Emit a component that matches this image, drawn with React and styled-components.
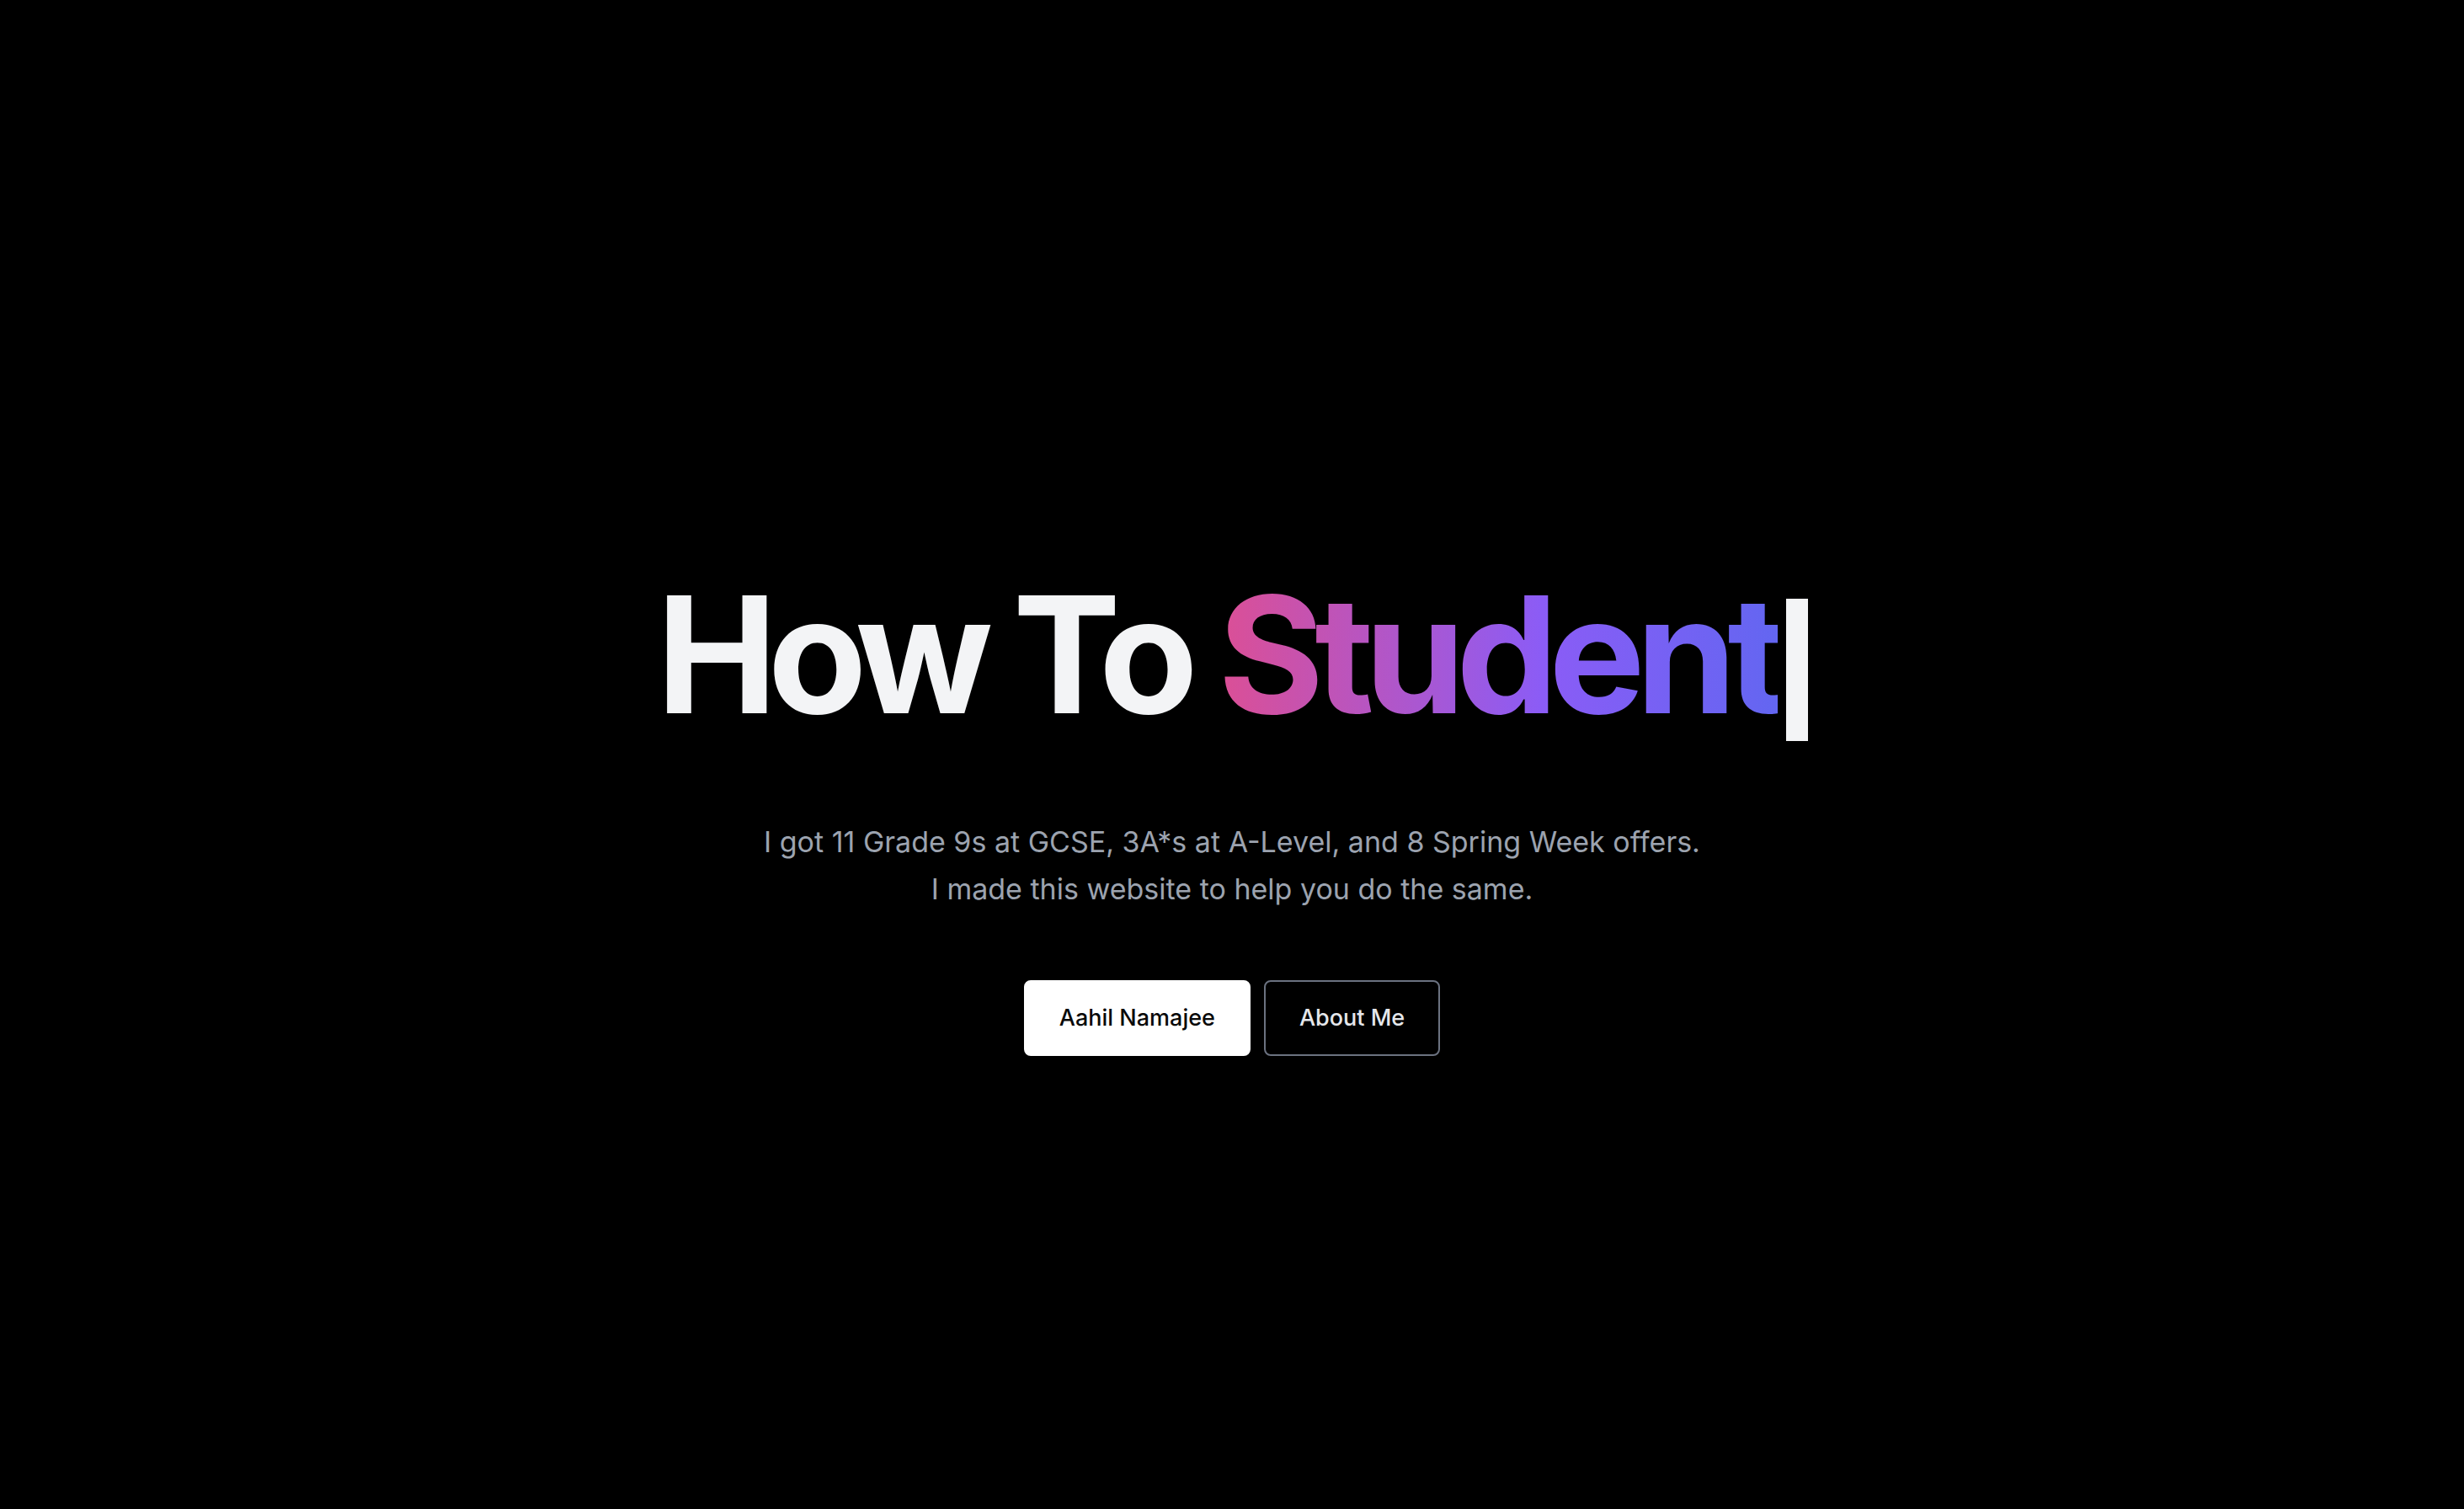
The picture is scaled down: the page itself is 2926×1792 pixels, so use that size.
import React from 'react';
import styled, { createGlobalStyle } from 'styled-components';

const GlobalStyle = createGlobalStyle`
  html, body {
    margin: 0;
    padding: 0;
    background: #000;
  }
  body {
    font-family: Inter, "Noto Sans", "Liberation Sans", sans-serif;
    -webkit-font-smoothing: antialiased;
  }
`;

const Main = styled.main`
  min-height: 100vh;
  box-sizing: border-box;
  padding-top: 142px;
  display: flex;
  flex-direction: column;
  align-items: center;
  justify-content: center;
  background: #000;
`;

const Title = styled.h1`
  margin: 0;
  font-size: 192px;
  line-height: 1;
  font-weight: 700;
  letter-spacing: -0.057em;
  color: #f3f4f6;
  white-space: nowrap;
`;

const Gradient = styled.span`
  background: linear-gradient(to right, #dc4f95 0%, #8b5cf6 58%, #6366f1 100%);
  -webkit-background-clip: text;
  background-clip: text;
  color: transparent;
`;

const Cursor = styled.span`
  display: inline-block;
  width: 26px;
  height: 169px;
  margin-left: 10px;
  vertical-align: -33px;
  background: #f3f4f6;
`;

const Subtitle = styled.p`
  margin: 92px 0 0;
  font-size: 34px;
  line-height: 56px;
  color: #9ca3af;
  text-align: center;
`;

const Actions = styled.div`
  margin-top: 80px;
  display: flex;
  gap: 16px;
`;

const Button = styled.a`
  display: inline-flex;
  align-items: center;
  justify-content: center;
  height: 90px;
  box-sizing: border-box;
  padding: 0 40px;
  border-radius: 8px;
  border: 2px solid ${p => (p.$outline ? '#6b7280' : '#fff')};
  background: ${p => (p.$outline ? '#000' : '#fff')};
  color: ${p => (p.$outline ? '#e5e7eb' : '#0a0a0a')};
  font-size: 27px;
  font-weight: 500;
  text-decoration: none;
  cursor: pointer;
`;

const App = () => {
  return (
    <Main>
      <GlobalStyle />
      <Title>
        How To <Gradient>Student</Gradient>
        <Cursor />
      </Title>
      <Subtitle>
        I got 11 Grade 9s at GCSE, 3A*s at A-Level, and 8 Spring Week offers.
        <br />
        I made this website to help you do the same.
      </Subtitle>
      <Actions>
        <Button href="#">Aahil Namajee</Button>
        <Button href="#" $outline>
          About Me
        </Button>
      </Actions>
    </Main>
  );
};

export default App;
